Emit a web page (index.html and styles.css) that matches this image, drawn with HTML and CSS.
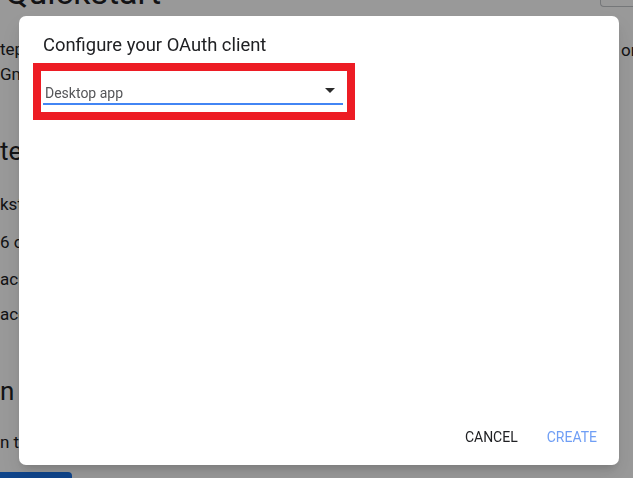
FILE: index.html
```html
<!DOCTYPE html>
<html lang="en">
<head>
<meta charset="utf-8">
<title>Configure your OAuth client</title>
<link rel="stylesheet" href="styles.css">
</head>
<body>
<div class="page">
  <div class="page-main">
    <h1 class="page-title">Quickstart</h1>
    <p class="text t1">teps described in the rest of this page, and in about five minutes<br>Gmail API requests.</p>
    <h2 class="heading h-a">teps</h2>
    <p class="text t2">kstart uses the following</p>
    <p class="text t3">6 or greater</p>
    <p class="text t4">ackage management tool</p>
    <p class="text t5">account with Gmail enabled</p>
    <h2 class="heading h-b">n API</h2>
    <p class="text t6">n to create a new Cloud Platform project</p>
    <button class="page-btn" type="button">Enable</button>
  </div>
  <div class="page-side">
    <div class="side-btn"></div>
    <p class="text side-text">on</p>
  </div>
</div>

<div class="scrim"></div>

<div class="dialog" role="dialog">
  <h2 class="dialog-title">Configure your OAuth client</h2>
  <div class="highlight">
    <div class="select-field">
      <span class="select-value">Desktop app</span>
      <span class="select-arrow"></span>
    </div>
  </div>
  <div class="dialog-actions">
    <button class="action action-cancel" type="button">CANCEL</button>
    <button class="action action-create" type="button">CREATE</button>
  </div>
</div>
</body>
</html>
```
FILE: styles.css
```css
html, body {
  margin: 0;
  padding: 0;
  background: #ffffff;
  overflow: hidden;
  width: 633px;
  height: 478px;
}

body {
  font-family: Roboto, "Liberation Sans", Arial, sans-serif;
  color: #202124;
}

.page {
  display: flex;
  width: 633px;
  height: 478px;
  overflow: hidden;
}

.page-main {
  flex: 0 0 600px;
  width: 600px;
  white-space: nowrap;
  overflow: hidden;
}

.page-title {
  margin: -28px 0 0 5px;
  font-size: 34px;
  line-height: 40px;
  font-weight: 400;
}

.text {
  margin: 0;
  font-size: 17px;
  line-height: 25px;
}

.t1 { margin-top: 25px; }
.heading {
  margin: 0;
  font-size: 26px;
  line-height: 32px;
  font-weight: 400;
}
.h-a { margin-top: 48px; }
.t2 { margin-top: 25px; }
.t3 { margin-top: 13px; }
.t4 { margin-top: 12px; }
.t5 { margin-top: 10px; }
.h-b { margin-top: 48px; }
.t6 { margin-top: 23px; }

.page-btn {
  display: block;
  margin-top: 17px;
  width: 72px;
  height: 36px;
  border: none;
  border-radius: 0 4px 0 0;
  background: #1a73e8;
  color: #ffffff;
  font: 500 14px Roboto, sans-serif;
}

.page-side {
  flex: 1 1 auto;
}

.side-btn {
  margin-top: -31px;
  height: 36px;
  border: 1px solid #c4c6ca;
  border-right: none;
  border-radius: 4px 0 0 4px;
}

.side-text {
  margin-top: 31px;
  padding-left: 21px;
}

.scrim {
  position: fixed;
  inset: 0;
  background: rgba(0, 0, 0, 0.4);
}

.dialog {
  position: fixed;
  left: 19px;
  top: 16px;
  width: 600px;
  height: 449px;
  box-sizing: border-box;
  padding-top: 17px;
  background: #ffffff;
  border-radius: 7px;
  box-shadow: 0 6px 10px -4px rgba(0, 0, 0, 0.18), 0 10px 22px 2px rgba(0, 0, 0, 0.08);
  display: flex;
  flex-direction: column;
}

.dialog-title {
  margin: 0 0 0 24px;
  font-size: 18.4px;
  line-height: 24px;
  font-weight: 400;
  color: #202124;
}

.highlight {
  margin: 6px 0 0 14px;
  width: 322px;
  height: 57px;
  box-sizing: border-box;
  border: 8px solid #ed1c24;
  padding: 0 4px 7px 2px;
  background: #ffffff;
}

.select-field {
  display: flex;
  align-items: flex-end;
  height: 34px;
  box-sizing: border-box;
  padding: 0 0 2px 2px;
  border-bottom: 2px solid #4285f4;
}

.select-value {
  font-size: 14px;
  color: #555659;
}

.select-arrow {
  margin-left: auto;
  margin-right: 8px;
  margin-bottom: 8px;
  width: 0;
  height: 0;
  border-left: 5px solid transparent;
  border-right: 5px solid transparent;
  border-top: 5px solid #2b2b2b;
}

.dialog-actions {
  margin-top: auto;
  display: flex;
  justify-content: flex-end;
  gap: 13px;
  padding: 0 14px 10px 0;
}

.action {
  height: 36px;
  padding: 0 8px;
  border: none;
  background: transparent;
  font-family: Roboto, "Liberation Sans", Arial, sans-serif;
  font-size: 14px;
  font-weight: 400;
  line-height: 36px;
}

.action-cancel { color: #202124; }
.action-create { color: #6f9ef5; }
```
